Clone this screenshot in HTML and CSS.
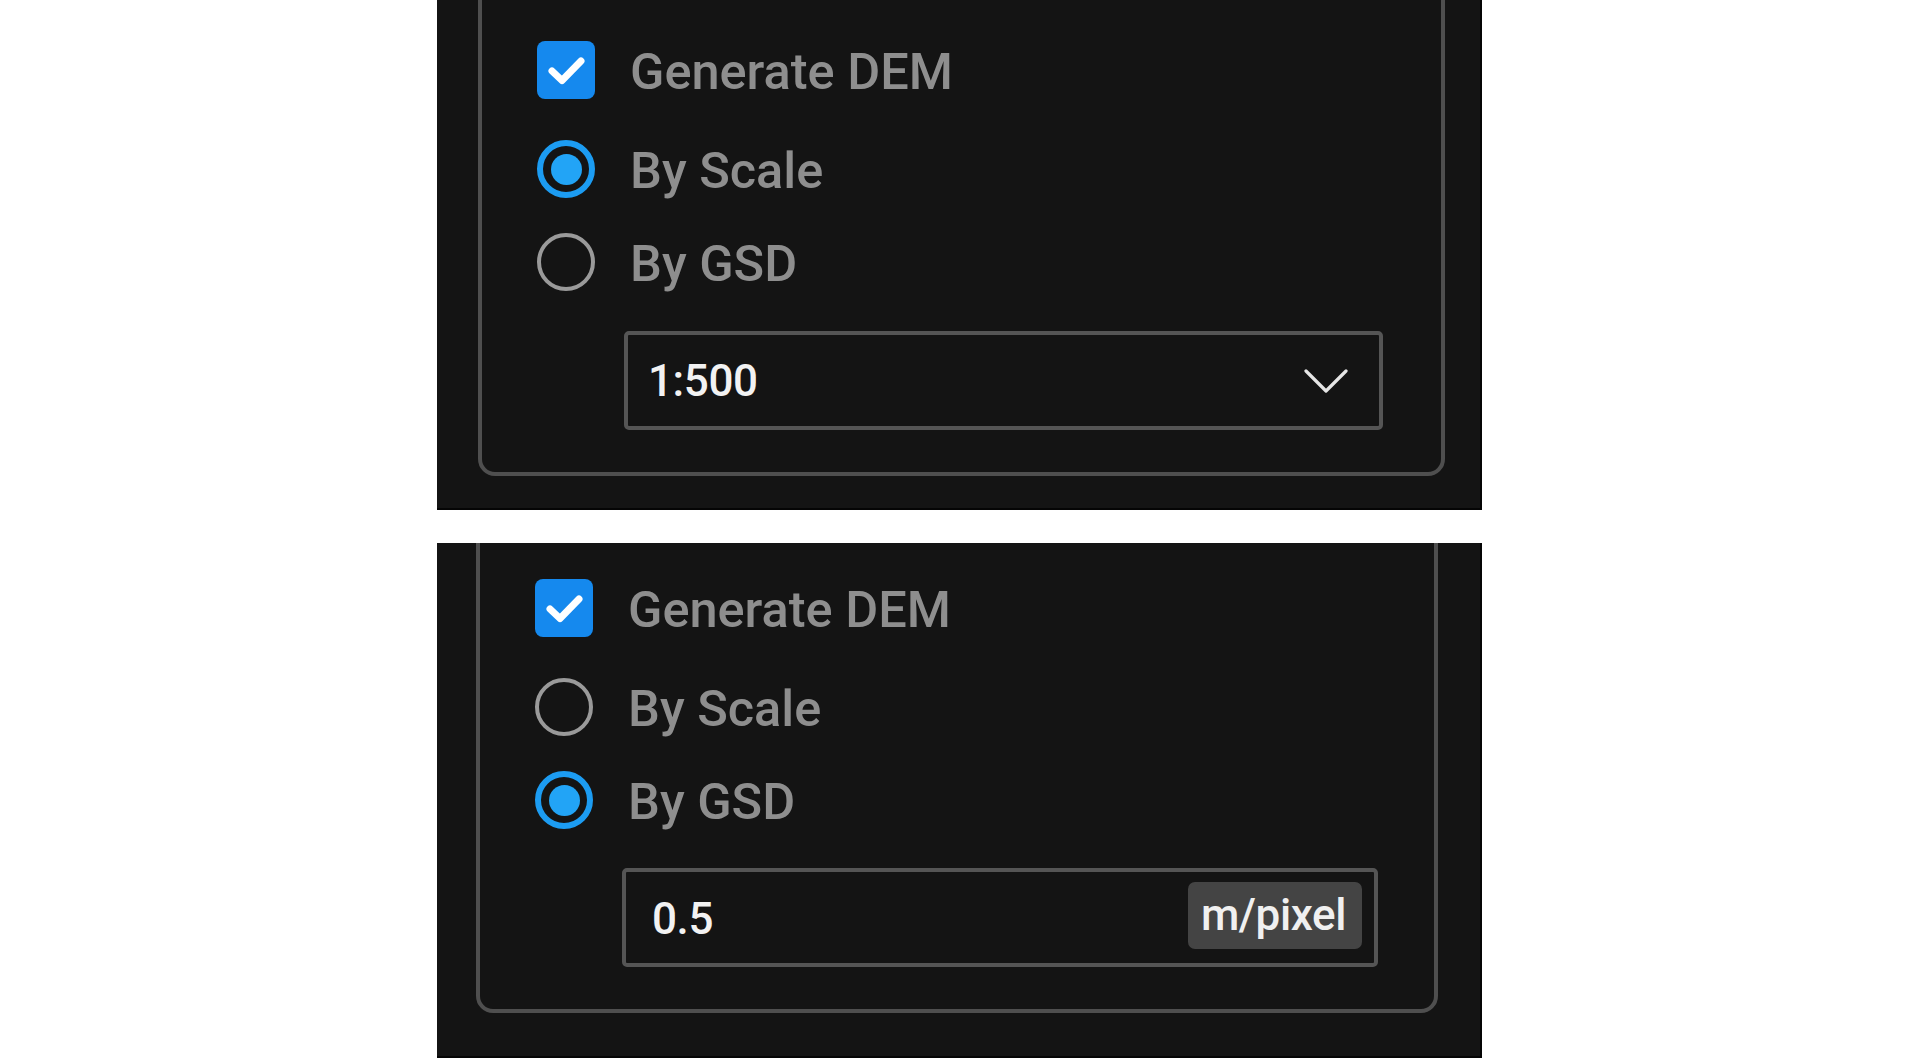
FILE: index.html
```html
<!DOCTYPE html>
<html lang="en">
<head>
<meta charset="utf-8">
<title>Generate DEM options</title>
<link rel="stylesheet" href="styles.css">
</head>
<body>
<div class="panel panel-a">
  <div class="group group-a">
    <label class="row row-first">
      <span class="checkbox">
        <svg viewBox="0 0 58 58" width="58" height="58"><path d="M15 30 L25 39.5 L44 20" fill="none" stroke="#ffffff" stroke-width="7" stroke-linecap="round" stroke-linejoin="round"/></svg>
      </span>
      <span class="label">Generate DEM</span>
    </label>
    <label class="row row-a2">
      <span class="radio radio-on"><span class="dot"></span></span>
      <span class="label">By Scale</span>
    </label>
    <label class="row row-a3">
      <span class="radio"></span>
      <span class="label">By GSD</span>
    </label>
    <div class="field field-a">
      <span class="value value-a">1:500</span>
      <svg class="chevron" viewBox="0 0 44 24" width="44" height="24"><path d="M2 2 L22 22 L42 2" fill="none" stroke="#e6e6e6" stroke-width="3.2" stroke-linecap="round" stroke-linejoin="round"/></svg>
    </div>
  </div>
</div>
<div class="panel panel-b">
  <div class="group group-b">
    <label class="row row-first">
      <span class="checkbox">
        <svg viewBox="0 0 58 58" width="58" height="58"><path d="M15 30 L25 39.5 L44 20" fill="none" stroke="#ffffff" stroke-width="7" stroke-linecap="round" stroke-linejoin="round"/></svg>
      </span>
      <span class="label">Generate DEM</span>
    </label>
    <label class="row row-b2">
      <span class="radio"></span>
      <span class="label">By Scale</span>
    </label>
    <label class="row row-b3">
      <span class="radio radio-on"><span class="dot"></span></span>
      <span class="label">By GSD</span>
    </label>
    <div class="field field-b">
      <span class="value value-b">0.5</span>
      <span class="unit">m/pixel</span>
    </div>
  </div>
</div>
</body>
</html>
```

FILE: styles.css
```css
html, body {
  margin: 0;
  padding: 0;
  background: #ffffff;
}

body {
  font-family: Roboto, "Liberation Sans", Arial, sans-serif;
  width: 1920px;
  height: 1058px;
  overflow: hidden;
}

.panel {
  margin-left: 437px;
  width: 1045px;
  background: #141414;
  overflow: hidden;
  box-sizing: border-box;
  box-shadow: inset -2px -2px 0 #050505;
}

.panel-a {
  height: 510px;
  padding: 0 37px 0 41px;
}

.panel-b {
  margin-top: 33px;
  height: 515px;
  padding: 0 44px 0 39px;
}

.group {
  box-sizing: border-box;
  border: 4px solid #4f4f4f;
  border-radius: 17px;
  margin-top: -20px;
  padding-left: 55px;
  display: flex;
  flex-direction: column;
  align-items: flex-start;
}

.group-a {
  height: 496px;
  padding-top: 57px;
}

.group-b {
  height: 490px;
  padding-top: 52px;
}

.row {
  display: flex;
  align-items: center;
  height: 58px;
}

.row-a2 { margin-top: 41px; }
.row-a3 { margin-top: 35px; }
.row-b2 { margin-top: 41px; }
.row-b3 { margin-top: 35px; }

.checkbox {
  width: 58px;
  height: 58px;
  border-radius: 8px;
  background: #1589ee;
  display: block;
  flex: none;
}

.checkbox svg {
  display: block;
}

.radio {
  box-sizing: border-box;
  width: 58px;
  height: 58px;
  border-radius: 50%;
  border: 4.5px solid #9a9a9a;
  flex: none;
  display: flex;
  align-items: center;
  justify-content: center;
}

.radio-on {
  border: 6px solid #1c9cf2;
}

.dot {
  width: 31px;
  height: 31px;
  border-radius: 50%;
  background: #22a4f6;
}

.label {
  margin-left: 35px;
  font-size: 50.5px;
  font-weight: 500;
  line-height: 58px;
  padding-top: 4px;
  color: #8e8e8e;
  white-space: nowrap;
}

.field {
  box-sizing: border-box;
  height: 99px;
  margin-left: 87px;
  border: 4px solid #555555;
  border-radius: 5px;
  display: flex;
  align-items: center;
  color: #f2f2f2;
  font-size: 44px;
  font-weight: 500;
  letter-spacing: -0.4px;
}

.field-a {
  margin-top: 40px;
  width: 759px;
  padding: 0 31px 0 20px;
}

.field-b {
  margin-top: 39px;
  width: 756px;
  padding: 0 12px 0 26px;
}

.value {
  flex: 1;
  line-height: 50px;
}

.value-b {
  padding-top: 2px;
}

.chevron {
  display: block;
  flex: none;
  margin-top: 0;
}

.unit {
  flex: none;
  background: #444444;
  border-radius: 7px;
  height: 67px;
  margin-top: -4px;
  padding: 0 16px 0 13px;
  line-height: 67px;
  color: #f0f0f0;
  font-size: 44px;
}
```
